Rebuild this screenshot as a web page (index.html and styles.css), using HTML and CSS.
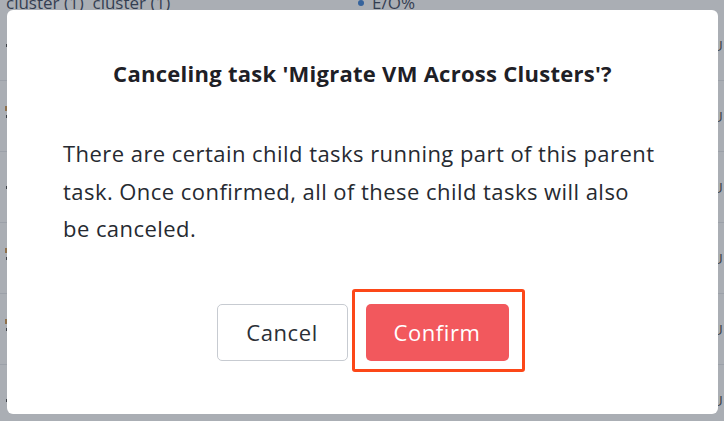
FILE: index.html
```html
<!DOCTYPE html>
<html lang="en">
<head>
	<meta charset="UTF-8">
	<title>Cancel task</title>
	<link rel="stylesheet" href="styles.css">
</head>
<body>
	<div id="page">
		<div class="top-row">
			<span class="cell-name">cluster (1)&nbsp;&nbsp;cluster (1)</span>
			<span class="cell-status"><i class="dot"></i>E/O%</span>
		</div>
		<ul id="rows">
			<li><span class="mark"></span><span class="end">U</span></li>
			<li><span class="mark warn"></span><span class="end">U</span></li>
			<li><span class="mark"></span><span class="end">U</span></li>
			<li><span class="mark warn"></span><span class="end">U</span></li>
			<li><span class="mark warn"></span><span class="end">U</span></li>
			<li><span class="mark"></span><span class="end">U</span></li>
		</ul>
	</div>
	<div id="overlay">
		<div id="dialog">
			<h2 class="title">Canceling task 'Migrate VM Across Clusters'?</h2>
			<p class="message">There are certain child tasks running part of this parent task. Once confirmed, all of these child tasks will also be canceled.</p>
			<div class="actions">
				<button class="btn btn-cancel">Cancel</button>
				<span class="confirm-wrap">
					<button class="btn btn-confirm">Confirm</button>
					<span class="highlight"></span>
				</span>
			</div>
		</div>
	</div>
</body>
</html>
```

FILE: styles.css
```css
*{
	margin: 0;
	padding: 0;
	box-sizing: border-box;
}
ul{
	list-style: none;
}
body{
	width: 724px;
	height: 421px;
	overflow: hidden;
	position: relative;
	font-family: "Open Sans", Lato, "Liberation Sans", sans-serif;
	background: #fff;
}
#page{
	height: 421px;
}
.top-row{
	height: 10px;
	overflow: hidden;
	display: flex;
	align-items: flex-end;
	font-size: 17px;
	color: #1a2a44;
	line-height: 14px;
	padding-left: 6px;
}
.cell-name{
	width: 352px;
}
.cell-status{
	display: flex;
	align-items: center;
	gap: 8px;
}
.dot{
	width: 6px;
	height: 6px;
	border-radius: 50%;
	background: #1f6fd1;
}
#rows li{
	height: 71px;
	border-bottom: 1px solid #e4e6ea;
	display: flex;
	justify-content: space-between;
	align-items: center;
	padding: 0 1px 0 6px;
}
.mark{
	width: 3px;
	height: 3px;
	background: #333;
}
.mark.warn{
	box-shadow: 0 -8px 0 1px #c98a3a;
}
.end{
	font-size: 15px;
	color: #333;
}
#overlay{
	position: absolute;
	left: 0;
	top: 0;
	width: 724px;
	height: 421px;
	background: rgba(78, 86, 98, 0.48);
	padding: 10px 6px 7px 7px;
	display: flex;
}
#dialog{
	flex: 1;
	background: #fff;
	border-radius: 6px;
	padding: 48px 40px 0 56px;
}
.title{
	font-size: 22px;
	line-height: 30px;
	font-weight: 700;
	letter-spacing: 0.27px;
	color: #1e2026;
	text-align: center;
	padding-right: 16px;
}
.message{
	margin-top: 47px;
	font-size: 22px;
	line-height: 37.5px;
	letter-spacing: 0.45px;
	color: #262a31;
	width: 595px;
}
.actions{
	margin-top: 56px;
	display: flex;
	justify-content: center;
	gap: 18px;
	padding-right: 16px;
}
.confirm-wrap{
	position: relative;
	display: flex;
}
.btn{
	height: 57px;
	border-radius: 5px;
	font-family: inherit;
	font-size: 22px;
	letter-spacing: 0.6px;
	cursor: pointer;
}
.btn-cancel{
	width: 131px;
	background: #fff;
	border: 1px solid #c7cbd1;
	color: #2b2f36;
}
.btn-confirm{
	width: 143px;
	background: #f2585d;
	border: none;
	color: #fff;
}
.highlight{
	position: absolute;
	left: -14px;
	top: -15px;
	right: -16px;
	bottom: -11px;
	border: 3px solid #fc4718;
	border-radius: 3px;
}
```
